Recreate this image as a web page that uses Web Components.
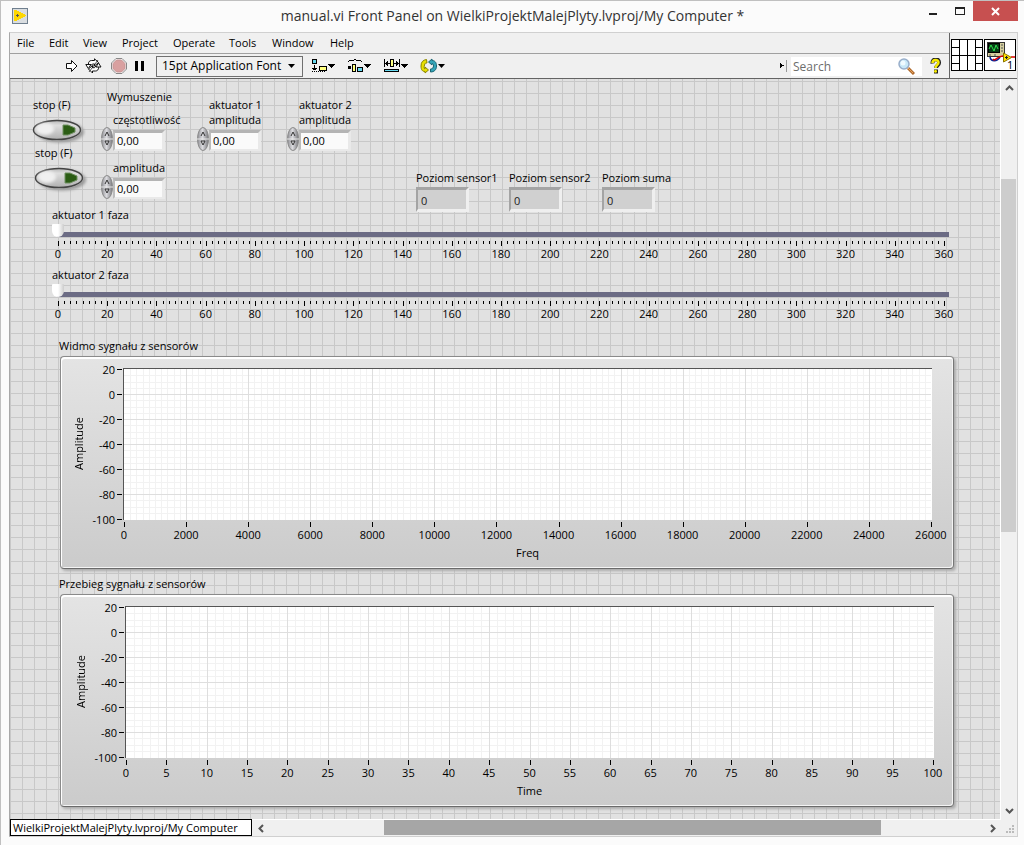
<!DOCTYPE html>
<html lang="en">
<head>
<meta charset="utf-8">
<title>manual.vi Front Panel</title>
<style>
  html, body { margin: 0; height: 100%; }
  body { font: 11px/15px "Open Sans", "Noto Sans", sans-serif; color: #000; background: #fbfbfb; }
</style>
</head>
<body>
<vi-window></vi-window>

<script>
const make = (name, html, setup) => {
  const tpl = document.createElement('template');
  tpl.innerHTML = '<style>*{box-sizing:border-box}button,input,select,output{font:inherit;color:inherit;margin:0}</style>' + html;
  customElements.define(name, class extends HTMLElement {
    constructor() {
      super();
      this.attachShadow({ mode: 'open' }).append(tpl.content.cloneNode(true));
    }
    connectedCallback() {
      if (setup && !this.ready) { this.ready = true; setup(this, this.shadowRoot); }
    }
  });
};

make('vi-titlebar', `
<style>
  :host { display: grid; grid-template-columns: 1fr auto 1fr; height: 31px; font-size: 14px; line-height: 20px; color: #333; }
  .icon { margin: 7px 0 0 11px; }
  h1 { margin: 5px 0 0; font: inherit; white-space: nowrap; }
  .controls { display: flex; justify-content: flex-end; height: 20px; padding-right: 6px; }
  button { border: 0; padding: 0; background: none; width: 27px; height: 20px; display: grid; place-items: center; }
  .close { width: 45px; background: #c75050; }
</style>
<svg class="icon" width="16" height="16" shape-rendering="crispEdges"><rect x=".5" y=".5" width="15" height="15" fill="#d9dde0" stroke="#6f7f8e"/><path d="M2 2h2l10 5v1L4 13H2z" fill="#ffd800"/><path d="M4 7.500h3M5.500 6v3" stroke="#555"/></svg>
<h1><slot></slot></h1>
<div class="controls">
  <button aria-label="Minimize"><svg width="10" height="10" shape-rendering="crispEdges"><rect x="1" y="7" width="8" height="2" fill="#222"/></svg></button>
  <button aria-label="Maximize"><svg width="12" height="10" shape-rendering="crispEdges"><path d="M1.500 1v8M10.500 1v8M1 8.500h10" stroke="#222"/><rect x="1" y="1" width="10" height="2" fill="#222"/></svg></button>
  <button class="close" aria-label="Close"><svg width="9" height="9"><path d="M1 1l7 7M8 1l-7 7" stroke="#fff" stroke-width="2"/></svg></button>
</div>`);

make('vi-menubar', `
<style>
  :host { display: block; height: 21px; border-bottom: 1px solid #a0a0a0; background: #f0f0f0; }
  nav { display: grid; grid-template-columns: 32px 34px 39px 51px 56px 43px 58px 39px; height: 18px; }
  button { border: 0; padding: 0 0 0 7px; background: none; text-align: left; white-space: nowrap; }
</style>
<nav><button>File</button><button>Edit</button><button>View</button><button>Project</button><button>Operate</button><button>Tools</button><button>Window</button><button>Help</button></nav>`);

make('vi-toolbar', `
<style>
  :host { display: flex; align-items: center; height: 25px; padding: 0 7px 0 55px; border-bottom: 1px solid #646464; background: #f0f0f0; }
  button { border: 0; padding: 0; background: none; display: block; }
  svg { display: block; }
  .run { margin-right: 7px; } .loop { margin-right: 9px; } .abort { margin-right: 7px; } .pause { margin-right: 11px; }
  .font { display: grid; width: 147px; height: 21px; margin-right: 8px; font-size: 12px; }
  .font > * { grid-area: 1 / 1; }
  select { appearance: none; border: 1px solid #707070; border-radius: 0; background: #f0f0f0; padding: 0 0 2px 5px; }
  .font svg { justify-self: end; align-self: center; margin-right: 7px; pointer-events: none; }
  .tool { margin-right: 12px; }
  .find { display: flex; align-items: center; margin-left: auto; }
  .field { display: flex; align-items: center; width: 131px; height: 19px; margin: 0 8px 0 4px; background: #fff; font-size: 12px; }
  input { flex: 1; min-width: 0; border: 0; padding: 0 0 0 2px; background: none; outline: 0; }
  input::placeholder { color: #6d6d6d; opacity: 1; }
  .field svg { margin-right: 7px; }
</style>
<button class="run" aria-label="Run"><svg width="13" height="14"><path d="M1.500 4.500h5v-3l5.500 5.500-5.500 5.500v-3h-5z" fill="#fff" stroke="#111"/></svg></button>
<button class="loop" aria-label="Run continuously"><svg width="17" height="16" fill="#fff" stroke="#111"><path d="M3.500 7.500V6a3 3 0 0 1 3-3.500h3V.8l4 3.700-4 3.500V6H7.500L6 7.500"/><path d="M13.500 8v1.500a3 3 0 0 1-3 3.500h-3v2L3.500 11l4-3.500v2.200h2L11 8"/><path d="M.8 6.500l5.200 0-2.700 4zM11 9h5l-2.500-4z"/><path d="M4 14L13 2" stroke-width=".7"/></svg></button>
<button class="abort" aria-label="Abort"><svg width="16" height="16"><path d="M5 .5h6l4.500 4.500v6L11 15.500H5L.5 11V5z" fill="#fff" stroke="#888"/><path d="M5.500 2h5L14 5.500v5L10.500 14h-5L2 10.500v-5z" fill="#d9a0a0" stroke="#c49393"/></svg></button>
<button class="pause" aria-label="Pause"><svg width="11" height="12"><path d="M1 1h3v10H1zM7 1h3v10H7z"/></svg></button>
<label class="font"><select aria-label="Text settings"><option>15pt Application Font</option></select><svg width="8" height="4"><path d="M0 0h7L3.500 4z"/></svg></label>
<button class="tool" aria-label="Align objects"><svg width="24" height="16" shape-rendering="crispEdges"><rect x="1.500" y="1.500" width="4" height="4" fill="#66d9f0" stroke="#000"/><path d="M3.500 7v5M1 10.500h5M2 11.500h3M1 13.500h1m1 0h1m1 0h1m1 0h1m1 0h1m1 0h1m1 0h1" stroke="#000"/><rect x="8.500" y="8.500" width="7" height="4" fill="#ffff80" stroke="#000"/><path d="M17 6h7l-3.500 4z"/></svg></button>
<button class="tool" aria-label="Distribute objects"><svg width="24" height="16" shape-rendering="crispEdges"><path d="M1 3.500h1m0-1h5m0-1h2m0 1h5m0 1h1" stroke="#000"/><path d="M1 8h3v3H1z"/><rect x="5.500" y="6.500" width="3" height="7" fill="#ffff80" stroke="#000"/><rect x="10.500" y="9.500" width="5" height="4" fill="#66d9f0" stroke="#000"/><path d="M17 6h7l-3.500 4z"/></svg></button>
<button class="tool" aria-label="Resize objects"><svg width="25" height="16" shape-rendering="crispEdges"><path d="M1.500 1v8M16.500 1v8M2 5.500h5m4 0h5M3.500 4v3M14.500 4v3M4.500 3v5M13.500 3v5" stroke="#000" /><rect x="7.500" y="1.500" width="3" height="7" fill="#ffff80" stroke="#000"/><rect x="1.500" y="11.500" width="14" height="2" fill="#66d9f0" stroke="#000"/><path d="M18 6h7l-3.500 4z"/></svg></button>
<button class="tool" aria-label="Reorder"><svg width="25" height="16"><path d="M6.500 1.500C3 2 1 4 1 8s1.500 5.500 4 5.500V15l3.500-3L5 9v2C4 11 4 9 4.500 7s1-2 2.500-2z" fill="#e8e000" stroke="#8a8400"/><path d="M10.500 14c3.500 0 6-2 6-6s-2-5.500-4.500-5.500V1L8.500 4l3.500 3V5.500c1 0 1.500 1 1.500 2.500s-1 3-3 3z" fill="#35a5b8" stroke="#1b6573"/><path d="M18 6h7l-3.500 4z"/></svg></button>
<div class="find">
  <svg width="7" height="12" shape-rendering="crispEdges"><path d="M0 3v5l4-2.500z"/><path d="M6.500 0v12" stroke="#999"/></svg>
  <label class="field"><input type="text" placeholder="Search" aria-label="Search"><svg width="17" height="17"><path d="M10 10l6 6" stroke="#b06a2c" stroke-width="3"/><path d="M10 10l5 5" stroke="#e6a35c"/><circle cx="6" cy="6" r="5" fill="#c8e8f8" stroke="#98aeca" stroke-width="1.500"/><circle cx="5" cy="5" r="2.500" fill="#effaff"/></svg></label>
  <button aria-label="Help"><svg width="12" height="16"><path d="M2.500 5.500C2 0 9.500 0 9 5c0 2.500-3 2.500-3 5" fill="none" stroke="#222" stroke-width="4"/><path d="M4 11.500h4v4H4z" fill="#222"/><path d="M2.500 5C2.500 1 8.500 1 8.500 4.500c0 2.500-3 2.500-3 5.500" fill="none" stroke="#f5ea00" stroke-width="2.500"/><circle cx="5.500" cy="13.300" r="1.500" fill="#f5ea00"/></svg></button>
</div>`);

make('vi-icon-pane', `
<style>
  :host { display: flex; padding: 6px 0 0 1px; border-left: 1px solid #646464; border-bottom: 1px solid #646464; background: #f0f0f0; }
  svg { display: block; }
</style>
<svg width="33" height="33" shape-rendering="crispEdges"><path d="M.5.500h31v31H.5zM8.500 0v32M16.500 0v32M24.500 0v32M0 8.500h8M24 8.500h8M0 16.500h32M0 24.500h8M24 24.500h8" fill="#fff" stroke="#000"/></svg>
<svg width="32" height="32"><rect x=".5" y=".5" width="31" height="31" fill="#fff" stroke="#000"/><rect x="3.500" y="3.500" width="17" height="14" fill="#d5cf9f" stroke="#333"/><rect x="4.500" y="4.500" width="11" height="9" fill="#063b14" stroke="#000"/><path d="M5 10l2-4 3 6 2-6 2 4" fill="none" stroke="#2ee04e"/><path d="M17 6h2m-2 3h2m-2 3h2M5 16h2m3 0h2" stroke="#555"/><path d="M6 18c1 5 7 5 10 0" fill="none" stroke="#00229a" stroke-width="1.500"/><path d="M9 20c2 3 4-3 10-3M27 18h4" fill="none" stroke="#e00000" stroke-width="1.500"/><path d="M19.500 14v9l8-4.500z" fill="#ffe000" stroke="#8c7500"/><path d="M21 18.500h3m-1.500-1.500v3" stroke="#222"/><text x="23" y="30" font-size="11">1</text></svg>`);

make('vi-stop', `
<style>
  :host { display: flex; flex-direction: column; gap: 6px; width: 54px; }
  label { padding-left: 1px; white-space: nowrap; }
  button { width: 54px; height: 27px; border: 0; padding: 0; background: none; }
  svg { display: block; }
</style>
<label for="b"><slot></slot></label>
<button id="b" aria-label="stop (F)"><svg width="54" height="27">
  <defs><linearGradient id="g" x1="0" y1="0" x2="0" y2="1"><stop offset="0" stop-color="#b8b8b8"/><stop offset=".25" stop-color="#dedede"/><stop offset="1" stop-color="#b0b0b0"/></linearGradient>
  <filter id="s"><feGaussianBlur stdDeviation="1.500"/></filter></defs>
  <ellipse cx="28" cy="14" rx="24" ry="10.500" fill="#999" filter="url(#s)"/>
  <ellipse cx="25" cy="12" rx="24.500" ry="10.500" fill="#d8d8d8"/>
  <ellipse cx="25" cy="12" rx="23.500" ry="9.500" fill="url(#g)" stroke="#444" stroke-width="1.500"/>
  <ellipse cx="13" cy="11" rx="9" ry="6" fill="#f0f0f0" filter="url(#s)"/>
  <path d="M31 7h5l7 3v4l-7 3h-5z" fill="#2b5c14" stroke="#6f8f60"/></svg></button>`);

make('vi-numeric', `
<style>
  :host { display: block; width: 66px; }
  label { display: block; width: min-content; padding-left: 12px; white-space: nowrap; }
  .row { display: flex; align-items: flex-end; height: 24px; }
  svg { display: block; }
  input { width: 52px; height: 21px; padding: 0 0 2px 2px; border: solid; border-width: 3px 3px 2px 2px; border-color: #b4b4b4 #e9e9e9 #e9e9e9 #bcbcbc; background: #fafafa; outline: 0; border-radius: 0; }
</style>
<label for="n"><slot></slot></label>
<div class="row"><svg width="12" height="24"><defs><linearGradient id="m"><stop offset="0" stop-color="#8d8d92"/><stop offset=".45" stop-color="#dcdce0"/><stop offset="1" stop-color="#77777c"/></linearGradient></defs>
<ellipse cx="6" cy="12" rx="5.500" ry="11.500" fill="url(#m)" stroke="#8a8a8a"/><path d="M0 12h12" stroke="#e8e8e8"/><path d="M4 9l2-4 2 4M4 14h4l-2 4z" fill="none" stroke="#333"/></svg>
<input id="n" type="text" value="0,00"></div>`);

make('vi-indicator', `
<style>
  :host { display: block; width: 93px; }
  label { display: block; white-space: nowrap; }
  output { display: block; width: 53px; height: 25px; margin-top: 2px; padding: 3px 0 0 3px; line-height: 15px; border: solid; border-width: 3px 3px 3px 2px; border-color: #a4a4a4 #efefef #efefef #a4a4a4; background: #d0d0d0; color: #222; }
</style>
<label for="o"><slot></slot></label><output id="o">0</output>`);

make('vi-slider', `
<style>
  :host { display: block; height: 60px; }
  label { display: block; }
  input { appearance: none; display: block; width: 100%; height: 17px; background: linear-gradient(#6b6b84, #6b6b84) 5px 10px / calc(100% - 6px) 5px no-repeat; outline: 0; }
  input::-webkit-slider-thumb { appearance: none; width: 12px; height: 13px; background: linear-gradient(90deg, #fff 50%, #ccc); border: 0; border-radius: 1px 1px 6px 6px; }
  .scale { margin: 2px 6px 0; }
  svg { display: block; width: 100%; height: 5px; overflow: visible; }
  .nums { display: flex; justify-content: space-between; }
  .nums span { width: 0; display: flex; justify-content: center; }
</style>
<label for="r"><slot></slot></label>
<input id="r" type="range" min="0" max="360" value="0">
<div class="scale"><svg shape-rendering="crispEdges"></svg><div class="nums"></div></div>`,
(el, root) => {
  let ticks = '', nums = '';
  for (let i = 0; i <= 144; i++) ticks += `<rect x="${i / 1.44}%" width="1" height="${i % 8 ? 3 : 5}"/>`;
  for (let v = 0; v <= 360; v += 20) nums += `<span>${v}</span>`;
  root.querySelector('svg').innerHTML = ticks;
  root.querySelector('.nums').innerHTML = nums;
});

make('vi-graph', `
<style>
  :host { display: block; }
  h2 { margin: 0 0 3px; font: inherit; }
  .frame { display: grid; grid-template: 152px 7px 18px 15px / 17px 28px 2px 6px 1fr; height: 213px; margin-left: 1px;
    padding: 11px var(--after, 21px) 0 var(--before, 9px); border: 1px solid #8a8a8a; border-bottom-color: #6a6a6a; border-right-color: #777; border-radius: 4px;
    box-shadow: inset 1px 2px #fff, inset -1px -1px #f4f4f4, 2px 2px 3px #aaa; background: linear-gradient(#e4e4e4, #cbcbcb); }
  .ylabel { grid-area: 1 / 1; display: grid; place-items: center; writing-mode: vertical-rl; transform: rotate(180deg); }
  .ynums { grid-area: 1 / 2; display: flex; flex-direction: column; justify-content: space-between; padding: 1px 0; }
  .ynums span { height: 0; display: flex; align-items: center; justify-content: flex-end; }
  svg { display: block; overflow: visible; }
  .yticks { grid-area: 1 / 4; width: 5px; height: 150px; margin-top: 1px; }
  .plot { grid-area: 1 / 5; border: solid #555; border-width: 1px 0 0 1px; background: #fff; }
  .plot svg { width: calc(100% - 1px); height: 150px; }
  .xticks { grid-area: 2 / 5; margin: 2px 1px 0; width: calc(100% - 2px); height: 5px; }
  .xnums { grid-area: 3 / 5; display: flex; justify-content: space-between; padding: 0 1px; }
  .xnums span { width: 0; display: flex; justify-content: center; }
  .xlabel { grid-area: 4 / 5; text-align: center; }
</style>
<h2><slot></slot></h2>
<div class="frame">
  <div class="ylabel">Amplitude</div><div class="ynums"></div>
  <svg class="yticks" shape-rendering="crispEdges"></svg>
  <div class="plot"><svg shape-rendering="crispEdges"></svg></div>
  <svg class="xticks" shape-rendering="crispEdges"></svg>
  <div class="xnums"></div><div class="xlabel"></div>
</div>`,
(el, root) => {
  const $ = s => root.querySelector(s);
  const max = +el.getAttribute('max'), step = +el.getAttribute('step'), sub = +el.getAttribute('minor');
  const n = max / step;
  let grid = '', major = '', xt = '', xn = '', yt = '', yn = '';
  for (let i = 1; i < n * sub; i++) {
    const line = `<rect x="${100 * i / (n * sub)}%" width="1" height="151"`;
    if (i % sub) grid += line + ' fill="#f2f2f2"/>'; else major += line + ' fill="#dedede"/>';
  }
  for (let i = 1; i < 24; i++) {
    const line = `<rect y="${100 * i / 24}%" width="100%" height="1"`;
    if (i % 4) grid += line + ' fill="#f2f2f2"/>'; else major += line + ' fill="#dedede"/>';
  }
  for (let i = 0; i <= n; i++) { xt += `<rect x="${100 * i / n}%" width="1" height="5"/>`; xn += `<span>${i * step}</span>`; }
  for (let v = 20; v >= -100; v -= 20) { yt += `<rect y="${(20 - v) / 1.2}%" width="5" height="1"/>`; yn += `<span>${v}</span>`; }
  $('.plot svg').innerHTML = grid + major;
  $('.xticks').innerHTML = xt; $('.xnums').innerHTML = xn;
  $('.yticks').innerHTML = yt; $('.ynums').innerHTML = yn;
  $('.xlabel').textContent = el.getAttribute('axis');
});

make('vi-panel', `
<style>
  :host { display: block; overflow: hidden; border-right: 1px solid #fff;
    background: linear-gradient(90deg, #c8c8c8 1px, transparent 1px) 0 0 / 12px 12px, linear-gradient(#c8c8c8 1px, transparent 1px) 0 2px / 12px 12px, #e1e1e1; }
  .controls { display: flex; align-items: flex-start; height: 128px; padding-left: 22px; }
  .stops { display: flex; flex-direction: column; width: 56px; margin: 18px 13px 0 0; }
  .stops :last-child { align-self: flex-end; }
  .force { display: flex; flex-direction: column; gap: 9px; width: 96px; margin: 10px 0 0; }
  .force h2 { margin: 0 0 -1px 6px; font: inherit; }
  .act { width: 90px; margin-top: 18px; }
  .sensors { display: flex; margin: 91px 0 0 39px; }
  .sliders { margin: 0 50px 0 42px; }
  .graphs { display: grid; gap: 7px; margin: 11px 46px 0 49px; }
  .time { --before: 11px; --after: 19px; }
</style>
<div class="controls">
  <div class="stops"><vi-stop>stop (F)</vi-stop><vi-stop>stop (F)</vi-stop></div>
  <div class="force"><h2>Wymuszenie</h2><vi-numeric>częstotliwość</vi-numeric><vi-numeric>amplituda</vi-numeric></div>
  <div class="act"><vi-numeric>aktuator 1<br>amplituda</vi-numeric></div>
  <div class="act"><vi-numeric>aktuator 2<br>amplituda</vi-numeric></div>
  <div class="sensors"><vi-indicator>Poziom sensor1</vi-indicator><vi-indicator>Poziom sensor2</vi-indicator><vi-indicator>Poziom suma</vi-indicator></div>
</div>
<div class="sliders"><vi-slider>aktuator 1 faza</vi-slider><vi-slider>aktuator 2 faza</vi-slider></div>
<div class="graphs">
  <vi-graph max="26000" step="2000" minor="10" axis="Freq">Widmo sygnału z sensorów</vi-graph>
  <vi-graph class="time" max="100" step="5" minor="5" axis="Time">Przebieg sygnału z sensorów</vi-graph>
</div>`);

make('vi-vscroll', `
<style>
  :host { display: flex; flex-direction: column; background: #f0f0f0; }
  button { border: 0; padding: 0; background: none; height: 17px; display: grid; place-items: center; }
  .track { flex: 1; display: grid; grid-template-rows: 83fr 353fr 270fr; }
  .thumb { grid-row: 2; background: #cdcdcd; margin-right: 1px; }
</style>
<button aria-label="Scroll up"><svg width="9" height="6"><path d="M1 5l3.500-3.500L8 5" fill="none" stroke="#555" stroke-width="2"/></svg></button>
<div class="track"><div class="thumb"></div></div>
<button aria-label="Scroll down"><svg width="9" height="6"><path d="M1 1l3.500 3.500L8 1" fill="none" stroke="#555" stroke-width="2"/></svg></button>`);

make('vi-statusbar', `
<style>
  :host { display: flex; height: 17px; background: #f0f0f0; }
  .target { width: 242px; border: 1px solid #000; padding: 0 2px; white-space: nowrap; background: #fff; }
  .bar { flex: 1; display: flex; border-top: 1px solid #fff; }
  button { border: 0; padding: 0; background: none; width: 17px; display: grid; place-items: center; }
  .track { flex: 1; display: grid; grid-template-columns: 115fr 496fr 103fr; }
  .thumb { grid-column: 2; background: #a6a6a6; margin-bottom: 1px; }
  .grip { align-self: end; margin: 0 1px 1px 5px; }
</style>
<div class="target"><slot></slot></div>
<div class="bar">
  <button aria-label="Scroll left"><svg width="6" height="9"><path d="M5 1L1.500 4.500 5 8" fill="none" stroke="#555" stroke-width="2"/></svg></button>
  <div class="track"><div class="thumb"></div></div>
  <button aria-label="Scroll right"><svg width="6" height="9"><path d="M1 1l3.500 3.500L1 8" fill="none" stroke="#555" stroke-width="2"/></svg></button>
</div>
<svg class="grip" width="10" height="10"><path d="M6 0h2v2H6zM3 3h2v2H3zM6 3h2v2H6zM0 6h2v2H0zM3 6h2v2H3zM6 6h2v2H6z" fill="#bbb"/></svg>`);

make('vi-window', `
<style>
  :host { display: grid; grid-template-rows: 31px 1fr; height: 100vh; border: 1px solid #c0c0c0; border-width: 1px 0 0 1px; padding-bottom: 8px; box-sizing: border-box; background: #fbfbfb; }
  .frame { display: grid; grid-template: auto 1fr 17px / 1fr 16px; margin: 0 6px 0 8px; border: 1px solid #d0d0d0; border-left-color: #a8a8a8; min-height: 0; }
  .top { grid-column: 1 / 3; display: grid; grid-template-columns: 1fr 68px; }
  vi-statusbar { grid-column: 1 / 3; }
  vi-panel { min-height: 0; }
</style>
<vi-titlebar>manual.vi Front Panel on WielkiProjektMalejPlyty.lvproj/My Computer *</vi-titlebar>
<div class="frame">
  <div class="top"><div><vi-menubar></vi-menubar><vi-toolbar></vi-toolbar></div><vi-icon-pane></vi-icon-pane></div>
  <vi-panel></vi-panel><vi-vscroll></vi-vscroll>
  <vi-statusbar>WielkiProjektMalejPlyty.lvproj/My Computer</vi-statusbar>
</div>`);
</script>
</body>
</html>
